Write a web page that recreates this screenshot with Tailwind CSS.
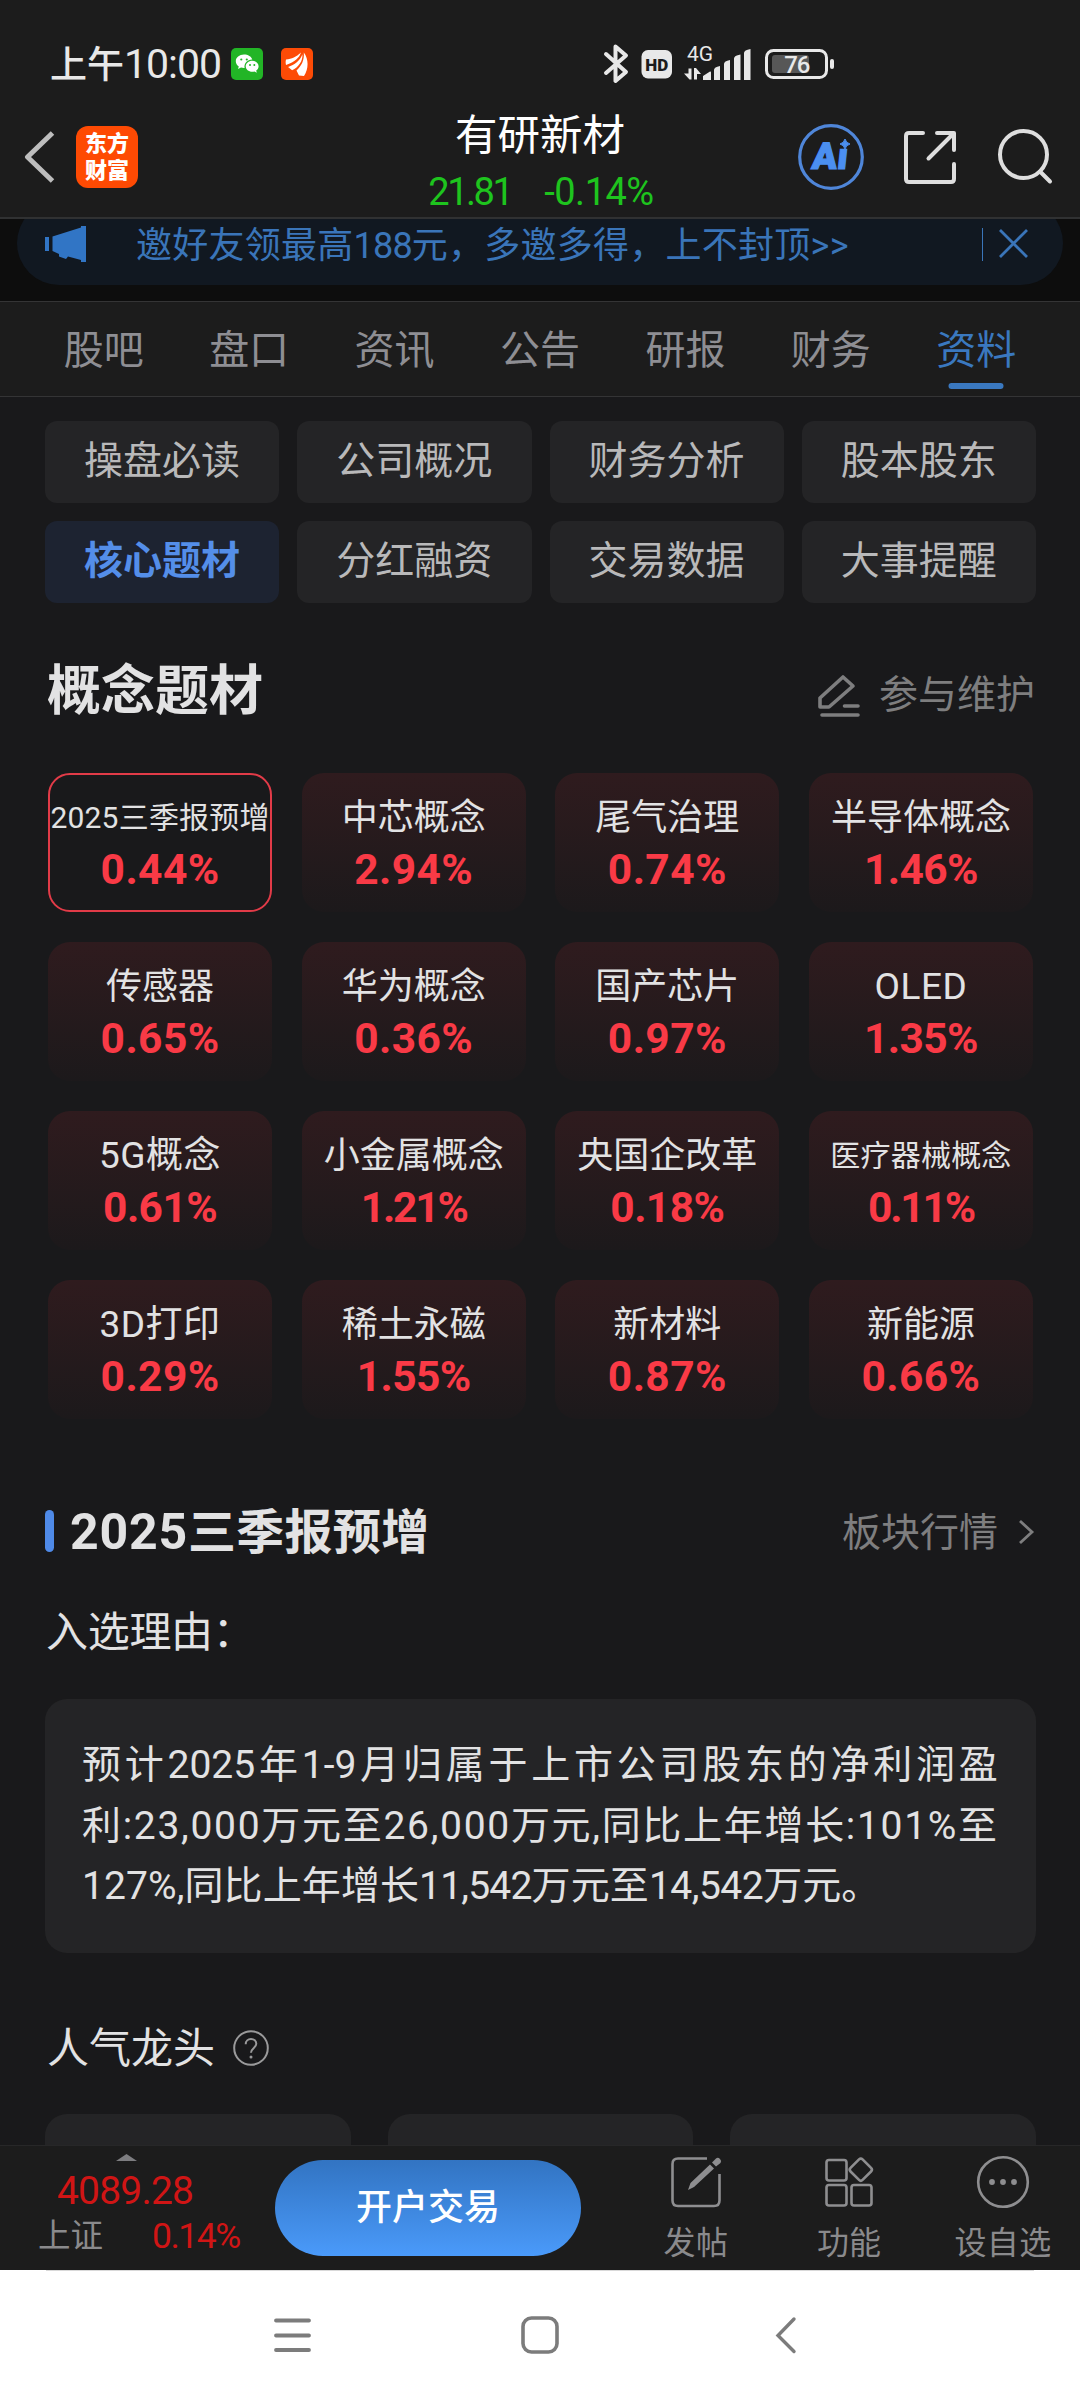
<!DOCTYPE html>
<html lang="zh-CN">
<head>
<meta charset="utf-8">
<title>有研新材</title>
<script src="https://cdn.jsdelivr.net/npm/@tailwindcss/browser@4"></script>
</head>
<body class="w-[1080px] h-[2400px] overflow-hidden bg-[#19191b] font-['Roboto','Noto_Sans_CJK_SC',sans-serif] flex flex-col text-[#e2e2e3] whitespace-nowrap">

<!-- status bar + title bar -->
<header class="h-[219px] shrink-0 bg-[#1c1c1c] border-b-2 border-[#303132] relative z-10">
  <div class="h-[94px] pt-[34px] flex">
    <div class="w-[181px] pl-[50px] text-[37px] leading-[61px] font-medium text-[#e8e8e8]">上午<span class="text-[41px] font-normal tracking-[-1px]">10:00</span></div>
    <svg class="mt-[14px] ml-[50px] w-8 h-8" viewBox="0 0 32 32"><rect width="32" height="32" rx="5" fill="#22b526"/><path d="M13 6.500c-4.600 0-8.200 3-8.200 6.700 0 2.100 1.200 4 3 5.200l-.8 2.600 3-1.500c1 .3 2 .4 3 .4h.6c-.9-4.600 3-8.600 7.700-8.500C20.400 8.600 17 6.500 13 6.500z" fill="#fff"/><path d="M27.600 18.300c0-3-2.900-5.500-6.400-5.500s-6.500 2.500-6.500 5.500 2.900 5.500 6.500 5.500c.8 0 1.600-.1 2.300-.4l2.300 1.300-.6-2.100c1.500-1 2.400-2.600 2.400-4.300z" fill="#fff"/><g fill="#22b526"><circle cx="10.300" cy="11.500" r="1.100"/><circle cx="15.800" cy="11.500" r="1.100"/><circle cx="19" cy="17" r="1"/><circle cx="23.300" cy="17" r="1"/></g></svg>
    <svg class="mt-[14px] ml-[18px] w-8 h-8" viewBox="0 0 32 32"><rect width="32" height="32" rx="5" fill="#fd4b06"/><path d="M5 17c-.5-2-.5-3.500 0-5.500 6-.5 10-2.500 15-7C18.500 9.500 14 14 5 17z" fill="#fff"/><path d="M10.500 21.500l-4-3.300C13 16 18.500 12 20.800 5.500 21.500 12 17 18.500 10.500 21.500z" fill="#fff" transform="translate(.6 .8)"/><path d="M18 27.500l-2.500-5C20.500 18 23.500 12 22.800 4.500c5 6.500 5 16.500.2 23.500z" fill="#fff"/></svg>
    <svg class="ml-[290px] mt-[9px] w-[236px] h-[42px]" viewBox="603 43 236 42">
      <path d="M606 54l20 18-10.500 9V46.500L626 55.500 606 73" fill="none" stroke="#e8e8e8" stroke-width="4" stroke-linejoin="round" stroke-linecap="round"/>
      <rect x="641.500" y="50" width="30.500" height="28.500" rx="6.500" fill="#e8e8e8"/>
      <text x="656.800" y="70.500" text-anchor="middle" font-size="17" font-weight="900" fill="#1c1c1c" font-family="Roboto">HD</text>
      <text x="687" y="60.500" font-size="21" font-weight="400" fill="#e8e8e8" font-family="Roboto">4G</text>
      <g fill="#e8e8e8"><path d="M688.500 68.500h3V79.500h-2L684 73.500h4.500zM694 79.500V68h2l5 6h-4v5.500zM703 76l7-4.500q1-.5 1 1V80h-8z"/><path d="M714 70q0-3 6-4v14h-6zM724 64q0-3 6-4v20h-6zM734 58.500q0-3 6.500-4V80H734zM744 53q0-3 6.500-4v31H744z"/></g>
      <rect x="766.500" y="50.500" width="60" height="27" rx="7" fill="none" stroke="#e8e8e8" stroke-width="3"/>
      <rect x="772" y="55" width="37" height="18" rx="3" fill="#575757"/>
      <rect x="830" y="59" width="4" height="10" rx="2" fill="#e8e8e8"/>
      <text x="796.800" y="73" text-anchor="middle" font-size="24" font-weight="500" letter-spacing="-1" fill="#e8e8e8" font-family="Roboto">76</text>
    </svg>
  </div>
  <div class="h-[123px] flex justify-between">
    <div class="w-[284px] flex">
      <svg class="ml-[24px] mt-[36px] w-[32px] h-[54px]" viewBox="0 0 32 54"><path d="M28.500 3L3.500 27l25 24" fill="none" stroke="#bdbdbd" stroke-width="5" stroke-linejoin="round"/></svg>
      <div class="ml-[20px] mt-[32px] w-[62px] h-[62px] rounded-[12px] bg-[#fe4a03] text-white text-[22px] leading-[27px] font-black pt-[4px] text-center">东方<br>财富</div>
    </div>
    <div class="pt-[16px] text-center">
      <div class="text-[42.500px] leading-[52px] text-white">有研新材</div>
      <div class="pl-[2px] text-[38px] leading-[60px] text-[#1ec41e] flex justify-center gap-[33px]"><span class="tracking-[-2.500px]">21.81</span><span class="tracking-[-0.500px]">-0.14%</span></div>
    </div>
    <svg class="mt-[28px] mr-[24px] w-[260px] h-[72px]" viewBox="796 122 260 72">
      <circle cx="831" cy="157" r="31.300" fill="none" stroke="#4f86d9" stroke-width="3.200"/>
      <text transform="translate(811 169.300) skewX(-6)" font-size="37" font-weight="900" fill="#4b8ff0" stroke="#4b8ff0" stroke-width="1.200" font-family="Roboto">Aı</text>
      <path d="M845 139q1 4 5 5-4 1-5 5-1-4-5-5 4-1 5-5z" fill="#4b8ff0" stroke="#4b8ff0" stroke-width="1"/>
      <g fill="none" stroke="#dedede" stroke-width="4" stroke-linecap="round" stroke-linejoin="round"><path d="M923 133h-14q-3 0-3 3v43q0 3 3 3h42q3 0 3-3v-15M937 133h17v17M953 134l-24.500 24.500"/><circle cx="1023.500" cy="154.500" r="23.500"/><path d="M1040 171.500l10 10"/></g>
    </svg>
  </div>
</header>

<!-- promo banner -->
<div class="h-[82px] shrink-0 bg-[#0d0d0d]">
  <div class="-mt-[18px] mx-[17px] h-[84px] rounded-full bg-[#111821] flex items-center pt-[2px] text-[#3a75b9]">
    <svg class="ml-[28px] w-[42px] h-[38px]" viewBox="45 225 42 38"><path d="M45 237h4v14h-4zM52.500 236.500L81 227.500V226h5v36h-5v-2l-13-3.500-2 2.500-7-2.500v-2.500l-6.500-3z" fill="#3175c5"/></svg>
    <div class="ml-[49px] pt-[3px] text-[36px] leading-[50px] tracking-[0.250px]">邀好友领最高<span class="tracking-[-0.800px]">188</span>元，多邀多得，上不封顶&gt;&gt;</div>
    <div class="ml-auto w-px h-[33px] bg-[#3a75b9]"></div>
    <svg class="ml-[15px] mr-[34px] w-[31px] h-[31px]" viewBox="0 0 31 31"><path d="M2 1l27 27M29 1L2 28" stroke="#3a75b9" stroke-width="2.800"/></svg>
  </div>
</div>

<!-- section tabs -->
<nav class="h-[96px] shrink-0 bg-[#1c1c1c] border-y border-[#343435] pl-[31px] pr-[31px] grid grid-cols-7 text-center text-[40px] leading-[98px] text-[#8e8e93]">
  <div>股吧</div><div>盘口</div><div>资讯</div><div>公告</div><div>研报</div><div>财务</div>
  <div class="text-[#3a78bf] relative">资料<span class="absolute left-1/2 -translate-x-1/2 top-[81px] w-[55px] h-[6px] rounded-full bg-[#3a78bf]"></span></div>
</nav>

<main class="flex-1 min-h-0 overflow-hidden">
  <!-- sub navigation -->
  <div class="mt-[24px] pl-[45px] pr-[44px] grid grid-cols-4 gap-x-[18px] gap-y-[18px] text-center text-[39px] leading-[81px] text-[#b9b9ba]">
    <div class="h-[82px] rounded-xl bg-[#242426]">操盘必读</div>
    <div class="h-[82px] rounded-xl bg-[#242426]">公司概况</div>
    <div class="h-[82px] rounded-xl bg-[#242426]">财务分析</div>
    <div class="h-[82px] rounded-xl bg-[#242426]">股本股东</div>
    <div class="h-[82px] rounded-xl bg-[#1d2331] text-[#548ee9] font-bold">核心题材</div>
    <div class="h-[82px] rounded-xl bg-[#242426]">分红融资</div>
    <div class="h-[82px] rounded-xl bg-[#242426]">交易数据</div>
    <div class="h-[82px] rounded-xl bg-[#242426]">大事提醒</div>
  </div>

  <!-- concept heading -->
  <div class="mt-[46px] h-[80px] pl-[47px] pr-[45px] flex items-center">
    <h2 class="pt-[5px] text-[54px] leading-[80px] font-bold">概念题材</h2>
    <svg class="ml-auto mt-[11px] w-[44px] h-[44px]" viewBox="816 672 44 44"><g fill="none" stroke="#7e7e7f" stroke-width="3.600" stroke-linejoin="round" stroke-linecap="round"><path d="M843 676l10 9-24 21h-9v-9zM844.500 705H858M822 714h36"/></g></svg>
    <span class="ml-[19px] mt-[12px] text-[39px] leading-[60px] text-[#7e7e7f]">参与维护</span>
  </div>

  <!-- concept cards -->
  <div id="cards" class="mt-[44px] pl-[48px] pr-[47px] grid grid-cols-4 gap-x-[29.5px] gap-y-[30px] text-center"></div>

  <!-- selected concept -->
  <div class="mt-[82px] h-[60px] pl-[45px] pr-[45px] flex items-center">
    <span class="w-[9px] h-[42px] rounded-full bg-[#4f8ae8]"></span>
    <h2 class="ml-[16px] pt-[3px] text-[48px] leading-[60px] font-bold"><span class="text-[50px] tracking-[0.800px]">2025</span><span class="tracking-[0.300px]">三季报预增</span></h2>
    <span class="ml-auto pt-[3px] text-[39px] leading-[60px] text-[#7e7e7f]">板块行情</span>
    <svg class="ml-[19px] mt-[2px] w-[18px] h-[28px]" viewBox="0 0 18 28"><path d="M3 3l12 11L3 25" fill="none" stroke="#7e7e7f" stroke-width="2.800"/></svg>
  </div>
  <div class="mt-[42px] pl-[46px] text-[42px] leading-[60px] tracking-[-0.300px]">入选理由：</div>
  <div class="mt-[36px] ml-[45px] mr-[44px] h-[254px] rounded-[22px] bg-[#242426] pl-[37px] pt-[36px] text-[39px] leading-[60.500px]">
    <div class="w-[916px] flex justify-between"><span>预</span><span>计</span><span>2025</span><span>年</span><span>1-9</span><span>月</span><span>归</span><span>属</span><span>于</span><span>上</span><span>市</span><span>公</span><span>司</span><span>股</span><span>东</span><span>的</span><span>净</span><span>利</span><span>润</span><span>盈</span></div>
    <div class="tracking-[1.700px]">利:23,000万元至26,000万元,同比上年增长:101%至</div>
    <div class="tracking-[0.100px]">127%,同比上年增长<span class="tracking-[-0.800px]">11,542</span>万元至<span class="tracking-[-0.500px]">14,542</span>万元。</div>
  </div>

  <!-- popular leaders -->
  <div class="mt-[65px] pl-[47px] h-[60px] flex items-center">
    <span class="pt-[2px] text-[42px] leading-[60px]">人气龙头</span>
    <svg class="ml-[18px] w-[36px] h-[36px]" viewBox="0 0 36 36"><circle cx="18" cy="18" r="16.800" fill="none" stroke="#9a9a9b" stroke-width="2"/><path d="M12.700 14.200c0-3.300 2.300-5.200 5.300-5.200s5.300 1.900 5.300 4.800c0 4-5.300 4.300-5.300 9" fill="none" stroke="#9a9a9b" stroke-width="2"/><circle cx="18" cy="27" r="1.500" fill="#9a9a9b"/></svg>
  </div>
  <div class="mt-[36px] pl-[45px] pr-[44px] grid grid-cols-3 gap-x-[37px]">
    <div class="h-[120px] rounded-[22px] bg-[#242426]"></div>
    <div class="h-[120px] rounded-[22px] bg-[#242426]"></div>
    <div class="h-[120px] rounded-[22px] bg-[#242426]"></div>
  </div>
</main>

<!-- bottom action bar -->
<footer class="h-[125px] shrink-0 bg-[#1c1c1c] border-t border-[#272728] flex">
  <div class="w-[275px] pt-[8px]">
    <svg class="ml-[116px] w-[21px] h-[7px]" viewBox="0 0 21 7"><path d="M0 7L10.500 0 21 7z" fill="#7d7d80"/></svg>
    <div class="pl-[57px] mt-[10px] text-[39px] leading-[40px] tracking-[-0.800px] text-[#d01515]">4089.28</div>
    <div class="pl-[38px] mt-[3px] flex text-[32.500px] leading-[44px] text-[#8a8a8c]">上证<span class="ml-[49px] text-[35.500px] tracking-[-1.500px] text-[#d01515]">0.14%</span></div>
  </div>
  <div class="mt-[14px] w-[306px] h-[96px] rounded-full bg-linear-to-b from-[#3274c2] to-[#4a9afa] text-center text-[36px] leading-[97px] font-medium text-white">开户交易</div>
  <div class="ml-auto mr-[27px] flex text-[32px] leading-[44px] text-[#8a8a8c] text-center">
    <div class="w-[100px] mr-[53px] pt-[9px] flex flex-col items-center">
      <svg class="w-[54px] h-[56px]" viewBox="669 2155 54 56"><path d="M707 2158.500h-29q-5.500 0-5.500 5.500v36.500q0 5.500 5.500 5.500h36q5.500 0 5.500-5.500V2174" fill="none" stroke="#8e8e90" stroke-width="2.600"/><path d="M688 2190l2.500-7L710 2164.500l4 4-20 18.500zM712 2162.500l4-4q2-1.500 4 .5t.5 4l-4.500 3.500z" fill="#8e8e90"/></svg>
      <div class="mt-[10px] tracking-[0.500px]">发帖</div>
    </div>
    <div class="w-[100px] mr-[54px] pt-[9px] flex flex-col items-center">
      <svg class="w-[54px] h-[56px]" viewBox="822.500 2155 54 56"><g fill="none" stroke="#8e8e90" stroke-width="2.600"><rect x="827" y="2160" width="20" height="20.500" rx="2.500"/><rect x="827" y="2185" width="20" height="20.500" rx="2.500"/><rect x="852" y="2185" width="20" height="20.500" rx="2.500"/><rect x="852.800" y="2161.200" width="17" height="17" rx="2.500" transform="rotate(45 861.300 2169.700)"/></g></svg>
      <div class="mt-[10px]">功能</div>
    </div>
    <div class="w-[100px] pt-[9px] flex flex-col items-center">
      <svg class="w-[54px] h-[56px]" viewBox="976 2155 54 56"><circle cx="1003" cy="2182" r="24.800" fill="none" stroke="#8e8e90" stroke-width="2.600"/><g fill="#8e8e90"><circle cx="992" cy="2182" r="2.900"/><circle cx="1003" cy="2182" r="2.900"/><circle cx="1014" cy="2182" r="2.900"/></g></svg>
      <div class="mt-[10px] tracking-[0.300px]">设自选</div>
    </div>
  </div>
</footer>

<!-- system navigation -->
<div class="h-[130px] shrink-0 bg-white px-[46px]">
  <div class="h-px bg-[#d9d9d9]"></div>
  <div class="flex items-center h-[130px] pl-[227px] -mt-[1px]">
    <svg class="w-[40px] h-[40px]" viewBox="0 0 40 40"><path d="M3 5.500h33M3 20.500h33M3 35h33" stroke="#7c7c7c" stroke-width="3.800" stroke-linecap="round"/></svg>
    <svg class="ml-[206.500px] w-[40px] h-[40px]" viewBox="0 0 40 40"><rect x="3" y="3" width="34" height="34" rx="8.500" fill="none" stroke="#7c7c7c" stroke-width="3.600"/></svg>
    <svg class="ml-[213.500px] w-[24px] h-[40px]" viewBox="0 0 24 40"><path d="M21 4L5 20.500l16 16" fill="none" stroke="#7c7c7c" stroke-width="3.400" stroke-linecap="round"/></svg>
  </div>
</div>

<script>
const items = [
  ['2025三季报预增','0.44%'],['中芯概念','2.94%'],['尾气治理','0.74%'],['半导体概念','1.46%'],
  ['传感器','0.65%'],['华为概念','0.36%'],['国产芯片','0.97%'],['OLED','1.35%'],
  ['5G概念','0.61%'],['小金属概念','1.21%'],['央国企改革','0.18%'],['医疗器械概念','0.11%'],
  ['3D打印','0.29%'],['稀土永磁','1.55%'],['新材料','0.87%'],['新能源','0.66%']
];
const active = 'h-[139px] rounded-[22px] border-2 border-[#e23b48] pt-[17px] flex flex-col items-center';
const normal = 'h-[139px] rounded-[22px] bg-linear-to-b from-[#2f1b1e] to-[#1c191b] pt-[19px] flex flex-col items-center';
const small = 'text-[30px] leading-[52px] tracking-[0.2px]';
const large = 'text-[36px] leading-[52px]';
const latin = 'text-[37px] leading-[52px] tracking-[0.5px]';
// digit 1 is set tighter, so the tracking depends on how many there are
const tracking = ['tracking-[0.4px]', 'tracking-[-0.6px]', 'tracking-[-2.2px]'];
const nameClass = n => n.length > 5 ? small : /[A-Z]/.test(n) ? latin : large;
document.getElementById('cards').innerHTML = items.map(([name, pct], i) =>
  `<div class="${i ? normal : active}"><div class="${nameClass(name)}">${name}</div><div class="text-[42.5px] leading-[51px] font-bold text-[#f93a46] ${tracking[pct.split('1').length - 1]}">${pct}</div></div>`).join('');
</script>
</body>
</html>
